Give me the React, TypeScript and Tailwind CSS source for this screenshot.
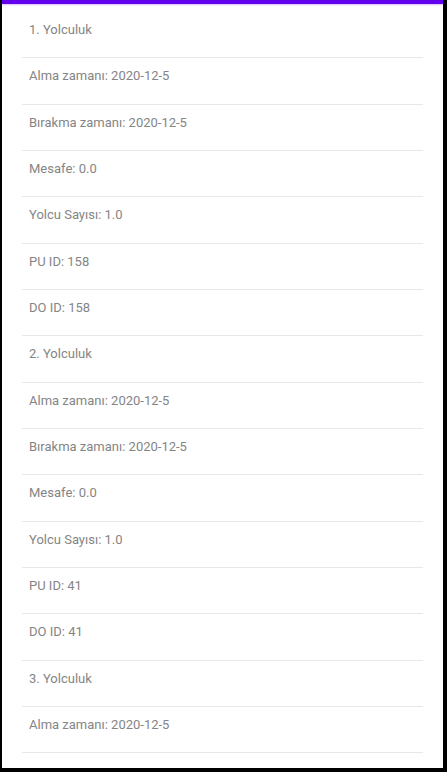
const trips = [
  { no: 1, pu: 158, do: 158 },
  { no: 2, pu: 41, do: 41 },
  { no: 3, pu: 41, do: 41 },
];

const rowsFor = (t: { no: number; pu: number; do: number }) => [
  `${t.no}. Yolculuk`,
  "Alma zamanı: 2020-12-5",
  "Bırakma zamanı: 2020-12-5",
  "Mesafe: 0.0",
  "Yolcu Sayısı: 1.0",
  `PU ID: ${t.pu}`,
  `DO ID: ${t.do}`,
];

const App = () => {
  // only what fits on screen
  const rows = trips.flatMap(rowsFor).slice(0, 16);

  return (
    <div className="h-[772px] w-[447px] overflow-hidden bg-black pl-[2px] pr-[4px] pb-[4px] font-['Roboto',sans-serif]">
      <div className="flex h-full flex-col overflow-hidden bg-white">
        <div className="h-[4px] shrink-0 bg-[#6200ee] shadow-[0_1px_2px_rgba(98,0,238,0.25)]" />
        <div className="px-[20px] pt-[8px]">
          {rows.map((text, i) => (
            <div
              key={i}
              className="h-[46.33px] border-b border-[#e8e8e8] pl-[7px] pt-[8px] text-[13px] leading-[20px] text-[#858585]"
            >
              {text}
            </div>
          ))}
        </div>
      </div>
    </div>
  );
};

export default App;
